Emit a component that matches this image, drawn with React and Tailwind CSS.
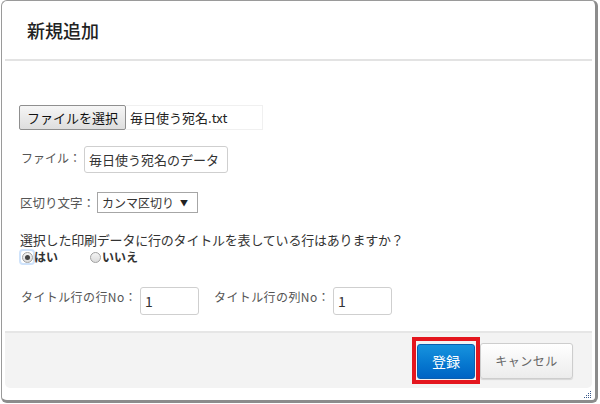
import React from 'react';

const font = { fontFamily: '"Noto Sans CJK JP", "Noto Sans", sans-serif' };

function Radio({ checked, label }) {
  return (
    <label className="flex items-center">
      <span
        className={`flex items-center justify-center w-[12px] h-[12px] ${
          checked ? 'outline outline-[2px] outline-[#cfe3fb] rounded-[2px]' : ''
        }`}
      >
        <span className="w-[11px] h-[11px] rounded-full border border-[#a0a0a0] bg-gradient-to-b from-[#f4f4f4] to-[#dcdcdc] flex items-center justify-center">
          {checked && <span className="w-[5px] h-[5px] rounded-full bg-[#444]" />}
        </span>
      </span>
      <span className="ml-[1px] font-semibold text-[#333] text-[12px] leading-[14px]">{label}</span>
    </label>
  );
}

function Field({ value, width }) {
  return (
    <div
      className="h-[28px] border border-[#cfcfcf] rounded-[3px] bg-white px-[4px] flex items-center text-[14px] text-[#333]"
      style={{ width }}
    >
      {value}
    </div>
  );
}

function ResizeGrip() {
  const dots = [];
  for (let r = 0; r < 4; r++) {
    for (let c = 3 - r; c < 4; c++) {
      dots.push(<rect key={`${r}-${c}`} x={c * 2} y={r * 2} width="1" height="1" fill="#3a5a8c" />);
    }
  }
  return (
    <svg width="8" height="8" viewBox="0 0 8 8">
      {dots}
    </svg>
  );
}

export default function App() {
  return (
    <div className="w-[600px] h-[404px] bg-white text-[13px]" style={font}>
      <div className="ml-[1px] w-[597px] h-[403px] border-l border-t border-[#9a9a9a] border-r-[3px] border-b-[3px] border-r-[#8c8c8c] border-b-[#8c8c8c] rounded-[6px] bg-white flex flex-col relative">
        {/* header */}
        <div className="h-[58px] flex items-center pl-[25px] shrink-0">
          <h2 className="text-[18px] text-[#222] font-medium leading-none">新規追加</h2>
        </div>
        <div className="mx-[3px] h-[2px] bg-[#e3e3e3] shrink-0" />

        {/* body */}
        <div className="flex-1 pl-[17px] text-[#555]">
          <div className="mt-[44px] flex items-center h-[25px]">
            <div className="h-[25px] px-[7px] flex items-center border border-[#8f8f8f] rounded-[2px] bg-gradient-to-b from-[#f6f6f6] to-[#dedede] text-[#111] text-[13px] whitespace-nowrap">
              ファイルを選択
            </div>
            <div className="h-[25px] w-[137px] flex items-center pl-[4px] border-t border-r border-b border-[#f0f0f0] text-[#222] whitespace-nowrap">
              毎日使う宛名.txt
            </div>
          </div>

          <div className="mt-[16px] flex items-start pl-[2px]">
            <span className="mt-[4px] text-[12px] leading-[16px] whitespace-nowrap">ファイル：</span>
            <div className="ml-[3px] h-[27px] w-[144px] border border-[#cfcfcf] rounded-[3px] px-[4px] flex items-center text-[13px] text-[#333] whitespace-nowrap">
              毎日使う宛名のデータ
            </div>
          </div>

          <div className="mt-[19px] flex items-center pl-[1px]">
            <span className="text-[12.5px] leading-[16px] whitespace-nowrap">区切り文字：</span>
            <div className="ml-[2px] h-[21px] w-[101px] border border-[#a6a6a6] bg-white flex items-center pl-[4px] text-[#333] whitespace-nowrap">
              <span className="text-[12px]">カンマ区切り</span>
              <span className="ml-[6px] text-[8px] text-[#222]">▼</span>
            </div>
          </div>

          <p className="mt-[18px] leading-[17px] pl-[1px] text-[#333] tracking-[-0.2px] whitespace-nowrap">
            選択した印刷データに行のタイトルを表している行はありますか？
          </p>
          <div className="mt-[1px] flex items-center h-[16px] pl-[2px]">
            <Radio checked label="はい" />
            <span className="w-[31px]" />
            <Radio label="いいえ" />
          </div>

          <div className="mt-[22px] flex items-start pl-[2px]">
            <span className="w-[116px] mt-[2px] text-[12px] leading-[15px] tracking-[0.4px] whitespace-nowrap">タイトル行の行No：</span>
            <div className="ml-[3px]">
              <Field value="1" width="59px" />
            </div>
            <span className="w-[116px] ml-[15px] mt-[2px] text-[12px] leading-[15px] tracking-[0.4px] whitespace-nowrap">タイトル行の列No：</span>
            <div className="ml-[3px]">
              <Field value="1" width="59px" />
            </div>
          </div>
        </div>

        {/* footer */}
        <div className="mx-[3px] h-[57px] shrink-0 bg-[#f3f3f3] border-t-2 border-[#e6e6e6] rounded-b-[5px] flex items-center justify-end pr-[19px]">
          <div className="border-[4px] border-[#e4161e] px-[1px] pt-[3px] pb-[1px]">
            <button className="w-[58px] h-[35px] rounded-[3px] border border-[#0a5fb0] bg-gradient-to-b from-[#1793de] to-[#0063c4] text-white text-[14px]">
              登録
            </button>
          </div>
          <button className="w-[93px] h-[36px] rounded-[3px] border border-[#cdcdcd] bg-gradient-to-b from-[#ffffff] to-[#ececec] shadow-[0_1px_1px_rgba(0,0,0,0.12)] text-[#666] text-[12px] tracking-[0.5px]">
            キャンセル
          </button>
        </div>
        <div className="h-[12px] shrink-0 flex justify-end items-end pr-[3px] pb-[1px]">
          <ResizeGrip />
        </div>
      </div>
    </div>
  );
}
